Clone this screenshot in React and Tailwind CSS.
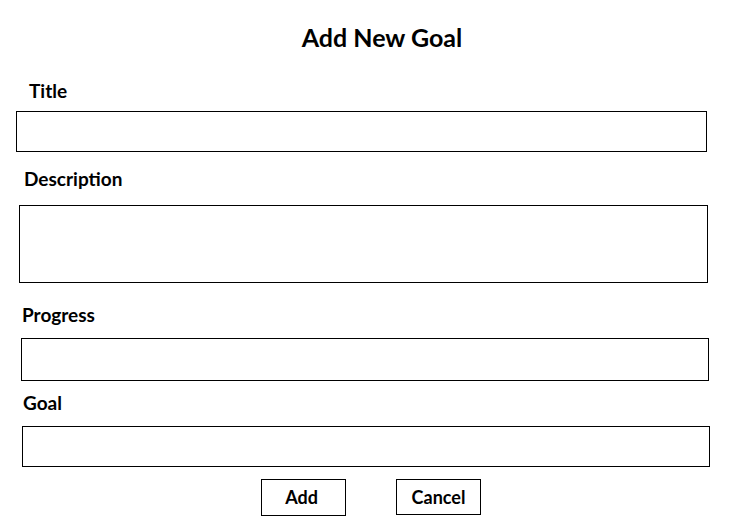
export default function App() {
  return (
    <div className="w-[756px] h-[525px] bg-white text-black flex flex-col items-start font-['Lato',sans-serif]">
      <h1 className="self-stretch text-center mt-[22px] h-[30px] text-[25px] leading-[30px] font-bold pl-[8px]">Add New Goal</h1>
      <label className="mt-[28px] ml-[29px] h-[22px] text-[19px] leading-[22px] font-bold">Title</label>
      <input className="mt-[9px] ml-[16px] w-[691px] h-[41px] border border-black outline-none" />
      <label className="mt-[16px] ml-[24px] h-[22px] text-[19px] leading-[22px] font-bold">Description</label>
      <textarea className="mt-[15px] ml-[19px] w-[689px] h-[78px] border border-black outline-none resize-none" />
      <label className="mt-[21px] ml-[22px] h-[22px] text-[19px] leading-[22px] font-bold">Progress</label>
      <input className="mt-[12px] ml-[21px] w-[688px] h-[43px] border border-black outline-none" />
      <label className="mt-[11px] ml-[23px] h-[22px] text-[19px] leading-[22px] font-bold">Goal</label>
      <input className="mt-[12px] ml-[22px] w-[688px] h-[41px] border border-black outline-none" />
      <div className="mt-[12px] ml-[261px] flex items-start gap-[50px]">
        <button className="w-[85px] h-[37px] border border-black bg-white text-[18px] font-bold pr-[4px]">Add</button>
        <button className="w-[85px] h-[36px] border border-black bg-white text-[18px] font-bold">Cancel</button>
      </div>
    </div>
  );
}
